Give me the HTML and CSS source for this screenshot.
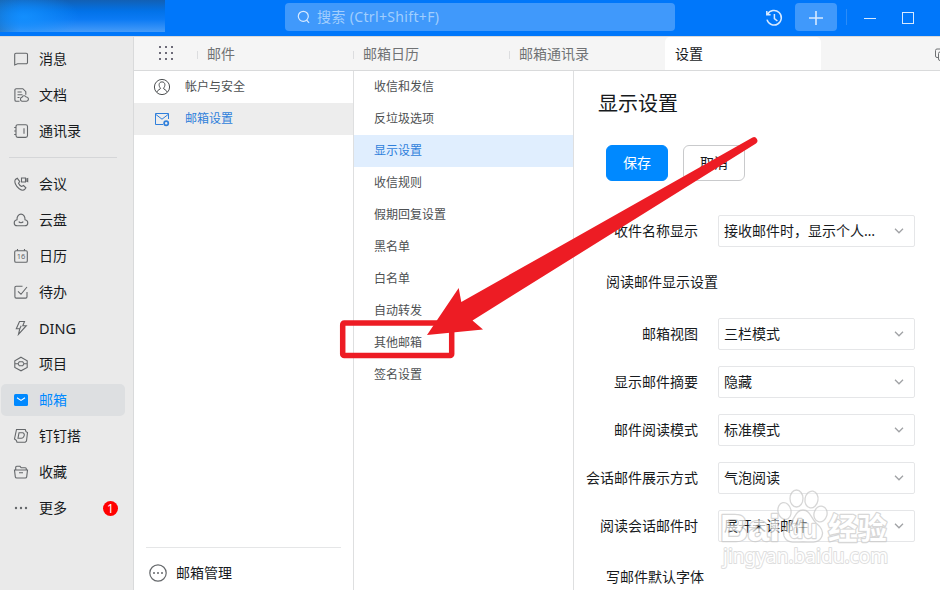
FILE: index.html
```html
<!DOCTYPE html>
<html lang="zh-CN">
<head>
    <meta charset="UTF-8">
    <meta name="viewport" content="width=device-width, initial-scale=1.0">
    <title>邮箱设置</title>
    <link rel="stylesheet" href="styles.css">
</head>
<body>
    <!-- Top bar -->
    <div class="topbar">
        <div class="account"></div>
        <div class="search">
            <svg width="14" height="14" viewBox="0 0 14 14"><circle cx="6.3" cy="6.3" r="5"/><path d="M9.5 10l2.6 2.8"/></svg>
            <span>搜索 (Ctrl+Shift+F)</span>
        </div>
        <div class="top-actions">
            <svg class="history" width="18" height="18" viewBox="0 0 18 18"><path d="M2.6 5.3A7.3 7.3 0 1 1 2 10.6M1.8 2v3.8h3.8M9.4 5v4.6l3 2.4"/></svg>
            <div class="add-btn"><svg width="16" height="16" viewBox="0 0 16 16"><path d="M8 1v14M1 8h14"/></svg></div>
            <div class="top-line"></div>
            <svg class="minimize" width="12" height="12" viewBox="0 0 12 12"><path d="M0 6.5h12"/></svg>
            <svg class="maximize" width="12" height="12" viewBox="0 0 12 12"><rect x=".5" y=".5" width="11" height="11"/></svg>
        </div>
    </div>

    <div class="main">
        <!-- Sidebar -->
        <div class="sidebar">
            <div class="nav-item"><svg viewBox="0 0 16 16"><path d="M3 2.2h10.200a1.300 1.300 0 0 1 1.300 1.300v8a1.300 1.300 0 0 1-1.300 1.300H4.600L1.700 14V3.500A1.300 1.300 0 0 1 3 2.200z"/></svg><span>消息</span></div>
            <div class="nav-item"><svg viewBox="0 0 16 16"><path d="M6.500 14.200H3.200a1.300 1.300 0 0 1-1.300-1.300V3a1.300 1.300 0 0 1 1.300-1.300h6.600l3 3v3M4.500 5h4.200M4.500 7.800h5M4.500 10.500h2M9 14.200a2 2 0 0 1 0-3.900 2.300 2.300 0 0 1 4.200-.3 2.100 2.100 0 0 1 .2 4.200z"/></svg><span>文档</span></div>
            <div class="nav-item"><svg viewBox="0 0 16 16"><rect x="3" y="1.700" width="11.500" height="12.700" rx="1.800"/><path d="M11 5.200v5.500M1.200 4.500H3M1.200 8H3M1.200 11.500H3"/></svg><span>通讯录</span></div>
            <div class="nav-divider"></div>
            <div class="nav-item"><svg viewBox="0 0 16 16"><path d="M4.300 2.200 2.400 3.500C.8 6 3.200 10.700 6.200 12.800c2.200 1.500 4.700 1.600 5.700.4l1-1.400-2.400-2.300-1.900 1c-1.500-.6-2.500-1.800-3.100-3.200l1.200-1.700zM8.500 2h4v4h-4zM12.500 3.600l2.200-1v3l-2.200-1"/></svg><span>会议</span></div>
            <div class="nav-item"><svg viewBox="0 0 16 16"><path d="M4.200 13.800C.2 13.600.3 8.300 4 7.700 3.500.3 12.500.3 12 7.700c3.700.6 3.800 5.900-.2 6.100zM5.700 9.700c1 1.300 3.600 1.300 4.600 0"/></svg><span>云盘</span></div>
            <div class="nav-item"><svg viewBox="0 0 16 16"><rect x="1.700" y="2.700" width="12.600" height="11.600" rx="1.300"/><path d="M4.500 1v1.700M11.500 1v1.700"/><text x="8" y="11" text-anchor="middle">16</text></svg><span>日历</span></div>
            <div class="nav-item"><svg viewBox="0 0 16 16"><path d="M9.500 2.200H3.200a1.300 1.300 0 0 0-1.300 1.300v9.300a1.300 1.300 0 0 0 1.300 1.300h9.500a1.300 1.300 0 0 0 1.300-1.300V8M5 7.300l3 3 6-7.300"/></svg><span>待办</span></div>
            <div class="nav-item"><svg viewBox="0 0 16 16"><path d="M6.500 1.500h5L9.800 5.700h3.500L5.500 14.300l1.300-5.600H3.300zM8.200 5.800 6.800 8.700"/></svg><span class="latin">DING</span></div>
            <div class="nav-item"><svg viewBox="0 0 16 16"><path d="M8 1.200 14.200 4.700v6.800L8 14.800 1.800 11.500V4.700zM2 7.800h3l1.300-2h3.400l1.300 2h3M5 7.800l1.300 2h3.400l1.300-2"/></svg><span>项目</span></div>
            <div class="nav-item active"><svg viewBox="0 0 16 16"><rect class="fill" x="1" y="2" width="14" height="12" rx="1.500"/><path class="flap" d="M4 5.800l4 2.600 4-2.600"/></svg><span>邮箱</span></div>
            <div class="nav-item"><svg viewBox="0 0 16 16"><path d="M3.500 1.500h8.800l.7 2.200 1.500.8-1 8.500-1.300 1.300H4l-.7-2L1.500 11zM6 4.800h3.500c3 0 2 5.400-1.200 5.400H5z"/></svg><span>钉钉搭</span></div>
            <div class="nav-item"><svg viewBox="0 0 16 16"><path d="M1.500 6h13l-.8 6.800a1.500 1.500 0 0 1-1.500 1.200H3.800a1.500 1.500 0 0 1-1.500-1.200zM2.700 6V3.300a1 1 0 0 1 1-1H7l1.200 1.500h4.100a1 1 0 0 1 1 1V6M6 8.800h4"/></svg><span>收藏</span></div>
            <div class="nav-item"><svg viewBox="0 0 16 16"><g class="dots"><circle cx="3" cy="8" r="1.200"/><circle cx="8" cy="8" r="1.200"/><circle cx="13" cy="8" r="1.200"/></g></svg><span>更多</span><b class="badge">1</b></div>
        </div>

        <div class="workspace">
            <!-- Tabs -->
            <div class="tabs">
                <div class="apps"><i></i><i></i><i></i><i></i><i></i><i></i><i></i><i></i><i></i></div>
                <div class="tab">邮件</div>
                <div class="tab">邮箱日历</div>
                <div class="tab">邮箱通讯录</div>
                <div class="tab current">设置</div>
                <svg class="windows" width="14" height="14" viewBox="0 0 14 14"><path d="M3 9.500H2A1.500 1.500 0 0 1 .5 8V2.500A1.500 1.500 0 0 1 2 1h6"/><rect x="3.500" y="4" width="9" height="8.500" rx="1.500"/></svg>
            </div>

            <div class="panels">
                <div class="panel">
                    <div class="group"><svg viewBox="0 0 18 18"><circle cx="9" cy="9" r="7.600"/><path d="M9 3.900c3.600 0 3.500 4.400 1.500 6.200 0 1.700 2.700 1.200 3.700 4M9 3.900c-3.600 0-3.500 4.400-1.500 6.200 0 1.700-2.700 1.200-3.700 4"/></svg><span>帐户与安全</span></div>
                    <div class="group selected"><svg viewBox="0 0 18 18"><path d="M10 14.500H2.500v-11h13V9M2.500 4.200 9 9.200l6.500-5"/><circle class="gear" cx="13.200" cy="13.200" r="2.100"/></svg><span>邮箱设置</span></div>
                    <div class="manage"><svg width="20" height="20" viewBox="0 0 20 20"><circle cx="10" cy="10" r="8.200"/><g class="dots"><circle cx="6" cy="10" r="1"/><circle cx="10" cy="10" r="1"/><circle cx="14" cy="10" r="1"/></g></svg><span>邮箱管理</span></div>
                </div>

                <div class="panel options">
                    <div class="option">收信和发信</div>
                    <div class="option">反垃圾选项</div>
                    <div class="option selected">显示设置</div>
                    <div class="option">收信规则</div>
                    <div class="option">假期回复设置</div>
                    <div class="option">黑名单</div>
                    <div class="option">白名单</div>
                    <div class="option">自动转发</div>
                    <div class="option">其他邮箱</div>
                    <div class="option">签名设置</div>
                </div>

                <!-- Display settings -->
                <div class="content">
                    <h1>显示设置</h1>
                    <div class="buttons">
                        <div class="btn primary">保存</div>
                        <div class="btn">取消</div>
                    </div>
                    <div class="field"><label>收件名称显示</label><div class="select"><span>接收邮件时，显示个人…</span><svg viewBox="0 0 10 6"><path d="M1 .8l4 4 4-4"/></svg></div></div>
                    <h2>阅读邮件显示设置</h2>
                    <div class="field"><label>邮箱视图</label><div class="select"><span>三栏模式</span><svg viewBox="0 0 10 6"><path d="M1 .8l4 4 4-4"/></svg></div></div>
                    <div class="field"><label>显示邮件摘要</label><div class="select"><span>隐藏</span><svg viewBox="0 0 10 6"><path d="M1 .8l4 4 4-4"/></svg></div></div>
                    <div class="field"><label>邮件阅读模式</label><div class="select"><span>标准模式</span><svg viewBox="0 0 10 6"><path d="M1 .8l4 4 4-4"/></svg></div></div>
                    <div class="field"><label>会话邮件展示方式</label><div class="select"><span>气泡阅读</span><svg viewBox="0 0 10 6"><path d="M1 .8l4 4 4-4"/></svg></div></div>
                    <div class="field"><label>阅读会话邮件时</label><div class="select"><span>展开未读邮件</span><svg viewBox="0 0 10 6"><path d="M1 .8l4 4 4-4"/></svg></div></div>
                    <h2 class="last">写邮件默认字体</h2>
                </div>
            </div>
        </div>
    </div>

    <!-- Watermark -->
    <svg class="watermark" width="180" height="84" viewBox="0 0 180 84">
        <g class="paw">
            <ellipse cx="67.500" cy="25" rx="6.500" ry="8.500" transform="rotate(-12 67.500 25)"/>
            <ellipse cx="79.500" cy="12.500" rx="6.500" ry="8.500"/>
            <ellipse cx="94.500" cy="13.500" rx="6.500" ry="8.500" transform="rotate(10 94.500 13.500)"/>
            <ellipse cx="103.500" cy="28" rx="6.500" ry="8" transform="rotate(15 103.500 28)"/>
            <path d="M86 24c7 0 8 8 13 13 5 4 8 8 6 13-3 8-11 6-19 6s-16 2-19-6c-2-6 2-10 7-14 4-4 5-12 12-12z"/>
        </g>
        <g class="wm-big">
            <text x="3" y="54.500" textLength="60" lengthAdjust="spacingAndGlyphs">Bai</text>
            <text class="wm-du" x="72" y="51.500" textLength="28" lengthAdjust="spacingAndGlyphs">du</text>
            <text class="wm-cn" x="111" y="53" textLength="59" lengthAdjust="spacingAndGlyphs">经验</text>
        </g>
        <text class="wm-url" x="6" y="77" textLength="165" lengthAdjust="spacingAndGlyphs">jingyan.baidu.com</text>
    </svg>

    <!-- Marker box and arrow -->
    <svg class="marker" width="940" height="590" viewBox="0 0 940 590">
        <rect x="342.700" y="323" width="109" height="32.500" rx="1.500"/>
        <path d="M427 335 458.700 288 461.300 302 752.500 137.500a3.500 3.500 0 0 1 3.500 6L472.500 320.500 483 329.500z"/>
    </svg>
</body>
</html>
```
FILE: styles.css
```css
body {
    margin: 0;
    width: 940px;
    height: 590px;
    overflow: hidden;
    display: flex;
    flex-direction: column;
    position: relative;
    font-family: "Noto Sans", "Noto Sans CJK SC", sans-serif;
    font-size: 14px;
    line-height: 20px;
    color: #171a1d;
    background: #fff;
}
svg {
    fill: none;
    stroke: currentColor;
    flex-shrink: 0;
}
.dots {
    fill: currentColor;
    stroke: none;
}

/* Top bar */
.topbar {
    display: flex;
    height: 36px;
    flex-shrink: 0;
    background: #0077fa;
    color: #d6e9ff;
}
.account {
    width: 165px;
    height: 32px;
    background: radial-gradient(ellipse 55px 26px at 24px 17px, rgba(20, 145, 255, 0.9), transparent),
        linear-gradient(90deg, rgba(28, 96, 160, 0.6), transparent 20px),
        linear-gradient(#1260b4, #0272e8 35%, #0b7af4 60%, #469bf8);
}
.search {
    display: flex;
    align-items: center;
    box-sizing: border-box;
    width: 390px;
    height: 28px;
    margin: 3px 0 0 120px;
    padding-left: 12px;
    gap: 6px;
    border-radius: 4px;
    background: #4099fb;
    color: #a2cefd;
    letter-spacing: 0.35px;
}
.search svg {
    stroke: #d6e9ff;
    stroke-width: 1.2;
}
.top-actions {
    display: flex;
    align-items: center;
    height: 36px;
    margin-left: 90px;
}
.history {
    stroke-width: 1.5;
}
.add-btn {
    display: flex;
    align-items: center;
    justify-content: center;
    width: 42px;
    height: 28px;
    margin: 0 9px 2px 12px;
    border-radius: 4px;
    background: #4099fb;
}
.add-btn svg {
    stroke-width: 1.6;
    margin-top: 2px;
}
.top-line {
    width: 1px;
    height: 16px;
    margin-bottom: 2px;
    background: #2b8cf8;
}
.minimize {
    margin-left: 17px;
}
.maximize {
    margin-left: 26px;
}

.main {
    display: flex;
    flex: 1;
    min-height: 0;
}

/* Sidebar */
.sidebar {
    display: flex;
    flex-direction: column;
    gap: 4px;
    box-sizing: border-box;
    width: 134px;
    padding: 6px 8px 0 1px;
    border-top: 1px solid #d9dadb;
    border-right: 1px solid #d9dadb;
    background: #eaeaea;
}
.nav-item {
    display: flex;
    align-items: center;
    box-sizing: border-box;
    height: 32px;
    flex-shrink: 0;
    padding: 0 7px 0 12px;
    gap: 10px;
    border-radius: 5px;
}
.nav-item svg {
    width: 16px;
    height: 16px;
    color: #64676a;
    stroke-width: 1.1;
}
.nav-item text {
    font: 7.5px "Noto Sans", sans-serif;
    fill: #64676a;
    stroke: none;
}
.nav-item.active {
    background: #dddfe1;
    color: #0089ff;
}
.nav-item.active .fill {
    fill: #0089ff;
    stroke: none;
}
.nav-item.active .flap {
    stroke: #fff;
}
.latin {
    font-size: 14.5px;
}
.nav-divider {
    height: 1px;
    margin: 6px 8px 6px;
    flex-shrink: 0;
    background: #d5d6d8;
}
.badge {
    width: 15px;
    height: 15px;
    margin-left: auto;
    border-radius: 50%;
    background: #f00;
    color: #fff;
    font: 12px/15px "Noto Sans", sans-serif;
    text-align: center;
}

/* Tabs */
.workspace {
    display: flex;
    flex-direction: column;
    flex: 1;
    min-width: 0;
}
.tabs {
    display: flex;
    align-items: flex-end;
    height: 33px;
    flex-shrink: 0;
    overflow: hidden;
    border-top: 1px solid #d9dadb;
    border-bottom: 1px solid #d9dadb;
    background: #f5f5f5;
    color: #707274;
}
.apps {
    display: grid;
    grid-template-columns: repeat(3, 2px);
    gap: 4px;
    margin: 0 24px 10px 25px;
}
.apps i {
    width: 2px;
    height: 2px;
    background: #6d6b78;
}
.tab {
    display: flex;
    align-items: center;
    box-sizing: border-box;
    width: 156px;
    height: 33px;
    flex-shrink: 0;
    padding-left: 9px;
}
.tab::before {
    content: "";
    width: 1px;
    height: 8px;
    margin: 3px 9px 0 -9px;
    background: #dcdddf;
}
.tab.current {
    background: #fff;
    border-radius: 5px 5px 0 0;
    color: #171a1d;
}
.tab.current::before {
    background: none;
}
.windows {
    margin: 0 0 8px 114px;
}

/* Setting lists */
.panels {
    display: flex;
    flex: 1;
    min-height: 0;
}
.panel {
    display: flex;
    flex-direction: column;
    box-sizing: border-box;
    width: 220px;
    flex-shrink: 0;
    border-right: 1px solid #dedfe0;
    color: #4d5052;
    font-size: 12px;
}
.group {
    display: flex;
    align-items: center;
    height: 32px;
    padding-left: 19px;
    gap: 14px;
}
.group svg {
    width: 18px;
    height: 18px;
}
.group.selected {
    background: #ededed;
    color: #2f7fdb;
}
.gear {
    stroke-width: 1.7;
}
.manage {
    display: flex;
    align-items: center;
    box-sizing: border-box;
    height: 43px;
    margin: auto 12px 0;
    padding: 7px 0 0 2px;
    gap: 8px;
    border-top: 1px solid #e5e6e7;
    color: #171a1d;
    font-size: 14px;
}
.manage svg {
    color: #66696c;
    stroke-width: 1.2;
}
.option {
    height: 32px;
    padding-left: 20px;
    line-height: 32px;
}
.option.selected {
    background: #e0eefe;
    color: #2f7fdb;
}

/* Settings form */
.content {
    flex: 1;
    overflow: hidden;
}
h1 {
    margin: 19px 0 0 24px;
    font-size: 20px;
    font-weight: 400;
    line-height: 28px;
}
.buttons {
    display: flex;
    gap: 15px;
    margin: 27px 0 34px 32px;
}
.btn {
    box-sizing: border-box;
    width: 62px;
    height: 36px;
    border: 1px solid #c9cacc;
    border-radius: 6px;
    line-height: 34px;
    text-align: center;
}
.btn.primary {
    border-color: #0089ff;
    background: #0089ff;
    color: #fff;
}
.field {
    display: flex;
    align-items: center;
    gap: 20px;
    margin-bottom: 16px;
}
.field label {
    width: 124px;
    text-align: right;
}
.select {
    display: flex;
    align-items: center;
    justify-content: space-between;
    box-sizing: border-box;
    width: 197px;
    height: 32px;
    padding: 0 10px 0 5px;
    border: 1px solid #e5e6e8;
    border-radius: 2px;
}
.select span {
    white-space: nowrap;
}
.select svg {
    width: 10px;
    height: 6px;
    color: #a0a2a5;
    stroke-width: 1.3;
}
h2 {
    margin: 25px 0 26px 32px;
    font-size: 14px;
    font-weight: 400;
    line-height: 20px;
}
h2.last {
    margin: 25px 0 0 32px;
}

/* Overlays */
.watermark {
    position: absolute;
    left: 717px;
    top: 486px;
    opacity: 0.72;
}
.watermark text {
    fill: #fff;
    stroke: #c8c8c8;
    stroke-width: 2.4;
    stroke-linejoin: round;
    paint-order: stroke;
}
.paw {
    fill: rgba(255, 255, 255, 0.5);
    stroke: #c8c8c8;
    stroke-width: 1.3;
}
.wm-big {
    font: bold 37px "Liberation Sans", sans-serif;
}
.wm-du {
    font-size: 25px;
}
.wm-cn {
    font: bold 30px "Noto Sans CJK SC", sans-serif;
}
.watermark .wm-url {
    font: 20px "Noto Sans", sans-serif;
    stroke: #d2d2d2;
    stroke-width: 2;
}
.marker {
    position: absolute;
    left: 0;
    top: 0;
    stroke: none;
    fill: #ed1c24;
}
.marker rect {
    fill: none;
    stroke: #ed1c24;
    stroke-width: 5.5;
}
```
